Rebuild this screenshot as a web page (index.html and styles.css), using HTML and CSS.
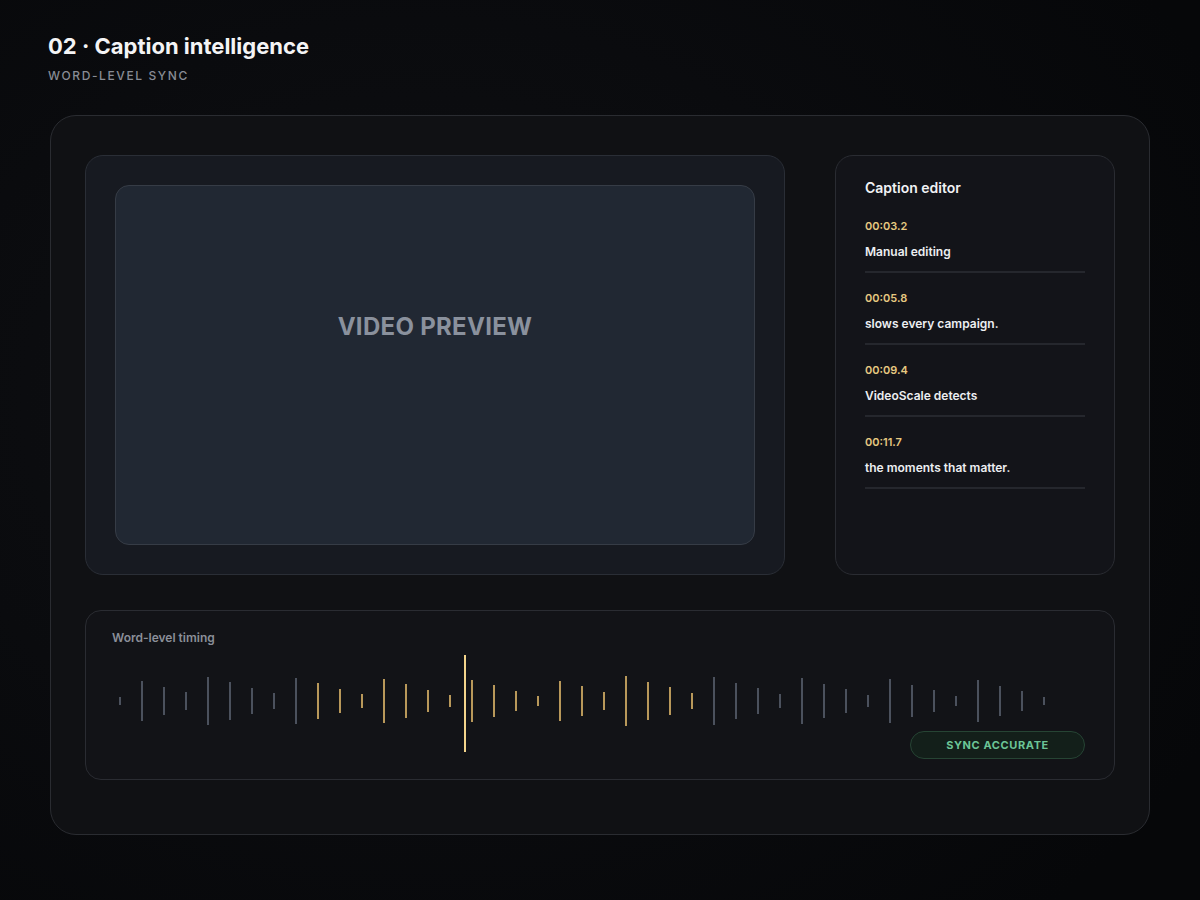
FILE: index.html
```html
<!DOCTYPE html>
<html lang="en">
<head>
<meta charset="utf-8">
<title>Caption intelligence</title>
<link rel="stylesheet" href="styles.css">
</head>
<body>
<header class="page-head">
  <h1 class="page-title">02 · Caption intelligence</h1>
  <p class="page-sub">WORD-LEVEL SYNC</p>
</header>
<main class="stage">
  <div class="top-row">
    <section class="video-panel">
      <div class="video-screen"><span class="video-label">VIDEO PREVIEW</span></div>
    </section>
    <aside class="editor">
      <h2 class="editor-title">Caption editor</h2>
      <ul class="cues">
        <li class="cue"><span class="cue-time">00:03.2</span><span class="cue-text">Manual editing</span></li>
        <li class="cue"><span class="cue-time">00:05.8</span><span class="cue-text">slows every campaign.</span></li>
        <li class="cue"><span class="cue-time">00:09.4</span><span class="cue-text">VideoScale detects</span></li>
        <li class="cue"><span class="cue-time">00:11.7</span><span class="cue-text">the moments that matter.</span></li>
      </ul>
    </aside>
  </div>
  <section class="timing">
    <h3 class="timing-label">Word-level timing</h3>
    <div class="bars">
      <i class="bar" style="height:8px"></i>
      <i class="bar" style="height:40px"></i>
      <i class="bar" style="height:28px"></i>
      <i class="bar" style="height:18px"></i>
      <i class="bar" style="height:48px"></i>
      <i class="bar" style="height:38px"></i>
      <i class="bar" style="height:26px"></i>
      <i class="bar" style="height:16px"></i>
      <i class="bar" style="height:46px"></i>
      <i class="bar gold" style="height:36px"></i>
      <i class="bar gold" style="height:24px"></i>
      <i class="bar gold" style="height:14px"></i>
      <i class="bar gold" style="height:44px"></i>
      <i class="bar gold" style="height:34px"></i>
      <i class="bar gold" style="height:22px"></i>
      <i class="bar gold" style="height:12px"></i>
      <i class="bar gold" style="height:42px"></i>
      <i class="bar gold" style="height:32px"></i>
      <i class="bar gold" style="height:20px"></i>
      <i class="bar gold" style="height:10px"></i>
      <i class="bar gold" style="height:40px"></i>
      <i class="bar gold" style="height:30px"></i>
      <i class="bar gold" style="height:18px"></i>
      <i class="bar gold" style="height:50px"></i>
      <i class="bar gold" style="height:38px"></i>
      <i class="bar gold" style="height:28px"></i>
      <i class="bar gold" style="height:16px"></i>
      <i class="bar" style="height:48px"></i>
      <i class="bar" style="height:36px"></i>
      <i class="bar" style="height:26px"></i>
      <i class="bar" style="height:14px"></i>
      <i class="bar" style="height:46px"></i>
      <i class="bar" style="height:34px"></i>
      <i class="bar" style="height:24px"></i>
      <i class="bar" style="height:12px"></i>
      <i class="bar" style="height:44px"></i>
      <i class="bar" style="height:32px"></i>
      <i class="bar" style="height:22px"></i>
      <i class="bar" style="height:10px"></i>
      <i class="bar" style="height:42px"></i>
      <i class="bar" style="height:30px"></i>
      <i class="bar" style="height:20px"></i>
      <i class="bar" style="height:8px"></i>
    </div>
    <div class="playhead"></div>
    <div class="status-row"><span class="badge">SYNC ACCURATE</span></div>
  </section>
</main>
</body>
</html>
```

FILE: styles.css
```css
* { box-sizing: border-box; }
html, body { margin: 0; padding: 0; }
body {
  width: 1200px;
  height: 900px;
  overflow: hidden;
  font-family: Inter, "Noto Sans", sans-serif;
  color: #eceef1;
  background: radial-gradient(ellipse 900px 700px at 35% 45%, #0f1013 0%, #0a0b0e 55%, #060709 100%);
}
.page-head {
  padding: 33px 0 0 48px;
  height: 115px;
}
.page-title {
  margin: 0;
  font-size: 22px;
  font-weight: 700;
  line-height: 27px;
  color: #f4f4f5;
  letter-spacing: 0;
}
.page-sub {
  margin: 9px 0 0;
  font-size: 12px;
  line-height: 14px;
  letter-spacing: 1.6px;
  color: #888c95;
  font-weight: 500;
}
.stage {
  margin-left: 50px;
  width: 1100px;
  height: 720px;
  border: 1px solid #2a2c31;
  border-radius: 26px;
  background: #101114;
  padding: 39px 34px;
  display: flex;
  flex-direction: column;
  gap: 35px;
}
.top-row {
  display: flex;
  gap: 50px;
  height: 420px;
}
.video-panel {
  width: 700px;
  height: 420px;
  border: 1px solid #2a2e36;
  border-radius: 18px;
  background: #171a21;
  padding: 29px;
}
.video-screen {
  width: 640px;
  height: 360px;
  border: 1px solid #363c46;
  border-radius: 14px;
  background: #212833;
  display: flex;
  align-items: center;
  justify-content: center;
  padding-bottom: 78px;
}
.video-label {
  font-size: 24px;
  font-weight: 700;
  color: #8a919d;
  letter-spacing: 0.3px;
}
.editor {
  width: 280px;
  height: 420px;
  border: 1px solid #2a2c32;
  border-radius: 18px;
  background: #131419;
  padding: 23px 29px;
}
.editor-title {
  margin: 0;
  font-size: 14px;
  font-weight: 600;
  line-height: 17px;
  color: #f1f2f4;
}
.cues {
  list-style: none;
  margin: 24px 0 0;
  padding: 0;
  display: flex;
  flex-direction: column;
  gap: 19px;
}
.cue {
  display: flex;
  flex-direction: column;
  gap: 11px;
  padding-bottom: 12px;
  border-bottom: 2px solid #25272d;
}
.cue-time {
  font-size: 11px;
  line-height: 13px;
  font-weight: 600;
  color: #e6c981;
}
.cue-text {
  font-size: 12px;
  line-height: 15px;
  font-weight: 600;
  color: #eceef1;
}
.timing {
  position: relative;
  height: 170px;
  border: 1px solid #2a2c32;
  border-radius: 16px;
  background: #121317;
  padding: 19px 29px 0 26px;
}
.timing-label {
  margin: 0;
  font-size: 12px;
  line-height: 16px;
  font-weight: 600;
  color: #8b8f99;
}
.bars {
  margin-top: 24px;
  height: 61px;
  display: flex;
  align-items: center;
  gap: 20px;
  padding-left: 7px;
}
.bar {
  display: block;
  width: 2px;
  flex: none;
  background: #4b515d;
}
.bar.gold { background: #b8985a; }
.playhead {
  position: absolute;
  left: 378px;
  top: 44px;
  width: 2px;
  height: 97px;
  background: #f3d48b;
}
.status-row {
  display: flex;
  justify-content: flex-end;
}
.badge {
  width: 175px;
  height: 28px;
  border: 1px solid #264434;
  border-radius: 14px;
  background: #131f1a;
  color: #6cc597;
  font-size: 11px;
  font-weight: 700;
  letter-spacing: 0.6px;
  display: flex;
  align-items: center;
  justify-content: center;
}
```
